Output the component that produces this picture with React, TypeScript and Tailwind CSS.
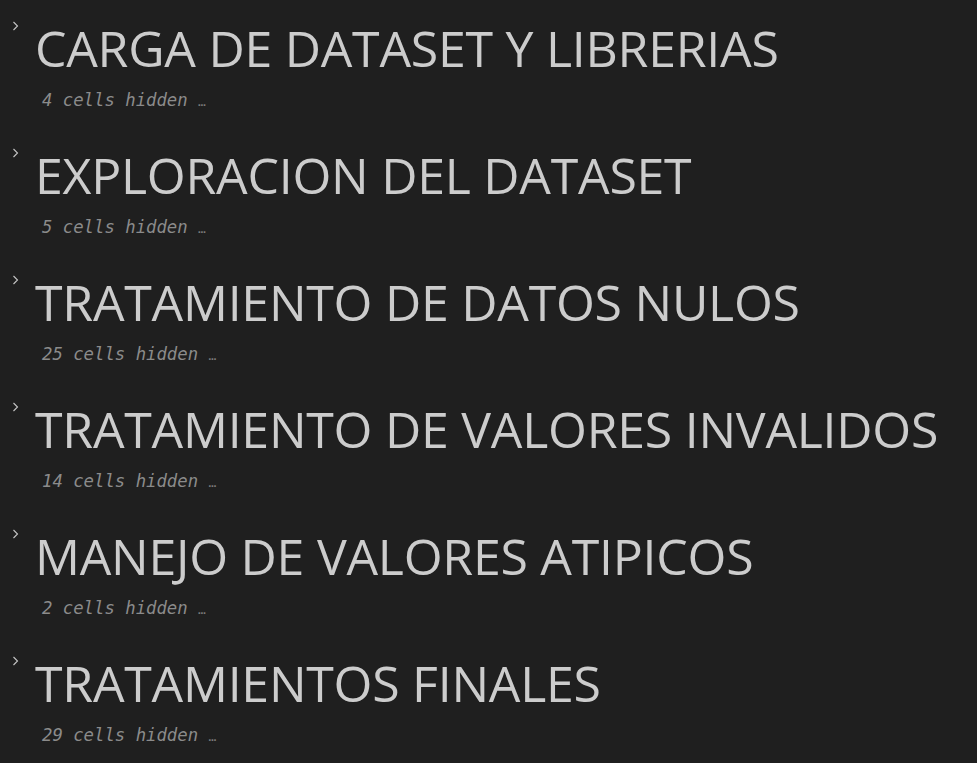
const sections = [
  { title: "CARGA DE DATASET Y LIBRERIAS", hidden: 4 },
  { title: "EXPLORACION DEL DATASET", hidden: 5 },
  { title: "TRATAMIENTO DE DATOS NULOS", hidden: 25 },
  { title: "TRATAMIENTO DE VALORES INVALIDOS", hidden: 14 },
  { title: "MANEJO DE VALORES ATIPICOS", hidden: 2 },
  { title: "TRATAMIENTOS FINALES", hidden: 29 },
];

const Chevron = () => (
  <svg width="12" height="12" viewBox="0 0 12 12" className="text-[#c5c5c5]">
    <path d="M3.5 2 L7.5 6 L3.5 10" fill="none" stroke="currentColor" strokeWidth="1.1" />
  </svg>
);

const Section = ({ title, hidden }: { title: string; hidden: number }) => (
  <div className="flex h-[127px]">
    <div className="w-[35px] shrink-0 pl-[10px] pt-[20px]">
      <Chevron />
    </div>
    <div className="flex flex-col">
      <h1 className="text-[50px] leading-[56px] pt-[20px] text-[#cccccc] font-['Open_Sans',sans-serif] tracking-[-0.25px]">
        {title}
      </h1>
      <div className="pl-[7px] pt-[14px] text-[17.3px] leading-[20px] italic text-[#8b8b8b] font-['DejaVu_Sans_Mono',monospace]">
        {hidden} cells hidden <span className="not-italic text-[13px] text-[#7a7a7a]">…</span>
      </div>
    </div>
  </div>
);

export default function App() {
  return (
    <div className="w-[977px] h-[763px] bg-[#1f1f1f] overflow-hidden">
      {sections.map((s, i) => (
        <Section key={i} title={s.title} hidden={s.hidden} />
      ))}
    </div>
  );
}
